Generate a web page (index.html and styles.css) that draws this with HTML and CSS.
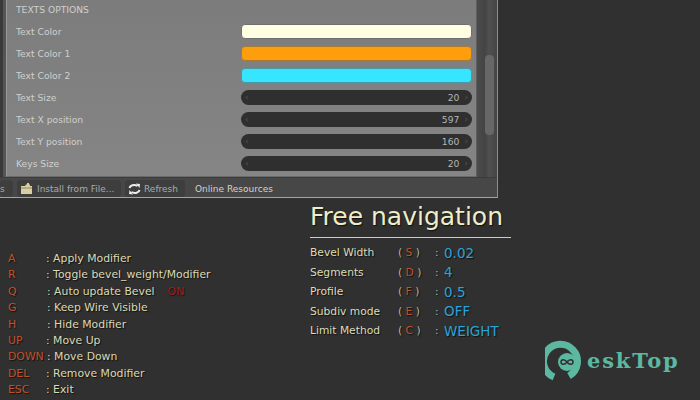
FILE: index.html
```html
<!DOCTYPE html>
<html lang="en">
<head>
<meta charset="UTF-8">
<title>Free navigation</title>
<link rel="stylesheet" href="styles.css">
</head>
<body>
<div class="ventana">
    <div class="cuerpo">
        <div class="panel">
            <div class="titulo">TEXTS OPTIONS</div>
            <div class="fila"><span>Text Color</span><div class="color crema"></div></div>
            <div class="fila"><span>Text Color 1</span><div class="color naranja"></div></div>
            <div class="fila"><span>Text Color 2</span><div class="color cian"></div></div>
            <div class="fila"><span>Text Size</span><div class="numero"><i>‹</i><b>20</b><i>›</i></div></div>
            <div class="fila"><span>Text X position</span><div class="numero"><i>‹</i><b>597</b><i>›</i></div></div>
            <div class="fila"><span>Text Y position</span><div class="numero"><i>‹</i><b>160</b><i>›</i></div></div>
            <div class="fila"><span>Keys Size</span><div class="numero"><i>‹</i><b>20</b><i>›</i></div></div>
        </div>
        <div class="scroll"><div class="thumb"></div></div>
    </div>
    <div class="pie">
        <div class="boton corto">s</div>
        <div class="boton instalar">
            <svg width="13" height="12" viewBox="0 0 13 12"><path d="M1 3h4l1-1.500h1V0h2v1.500h1V3h2v8H1z" fill="#d8cfa0"/><path d="M1 5h11" stroke="#8b8468"/></svg>
            Install from File...
        </div>
        <div class="boton refrescar">
            <svg width="13" height="12" viewBox="0 0 13 12" fill="none" stroke="#eee" stroke-width="2"><path d="M1.500 5C2 2.500 6 1 9.500 3"/><path d="M11.500 7C11 9.500 7 11 3.500 9"/><path d="M8 0.500l4 .5-.5 4z" fill="#eee" stroke="none"/><path d="M5 11.500l-4-.5.500-4z" fill="#eee" stroke="none"/></svg>
            Refresh
        </div>
        <div class="enlace">Online Resources</div>
    </div>
</div>
<div class="abajo">
    <div class="atajos">
        <div class="atajo"><span class="tecla">A</span><span>: Apply Modifier</span></div>
        <div class="atajo"><span class="tecla">R</span><span>: Toggle bevel_weight/Modifier</span></div>
        <div class="atajo"><span class="tecla">Q</span><span class="corrido">: Auto update Bevel</span><span class="activo">ON</span></div>
        <div class="atajo"><span class="tecla">G</span><span class="corrido">: Keep Wire Visible</span></div>
        <div class="atajo"><span class="tecla">H</span><span class="corrido">: Hide Modifier</span></div>
        <div class="atajo"><span class="tecla">UP</span><span>: Move Up</span></div>
        <div class="atajo"><span class="tecla">DOWN</span><span class="corrido">: Move Down</span></div>
        <div class="atajo"><span class="tecla">DEL</span><span>: Remove Modifier</span></div>
        <div class="atajo"><span class="tecla">ESC</span><span>: Exit</span></div>
    </div>
    <div class="navegacion">
        <h1>Free navigation</h1>
        <div class="opcion"><span class="nombre">Bevel Width</span><span class="par">( <em>S</em> )</span><span class="dos">:</span><span class="valor">0.02</span></div>
        <div class="opcion"><span class="nombre">Segments</span><span class="par">( <em>D</em> )</span><span class="dos">:</span><span class="valor">4</span></div>
        <div class="opcion"><span class="nombre">Profile</span><span class="par">( <em>F</em> )</span><span class="dos">:</span><span class="valor">0.5</span></div>
        <div class="opcion"><span class="nombre">Subdiv mode</span><span class="par">( <em>E</em> )</span><span class="dos">:</span><span class="valor">OFF</span></div>
        <div class="opcion"><span class="nombre">Limit Method</span><span class="par">( <em>C</em> )</span><span class="dos">:</span><span class="valor">WEIGHT</span></div>
    </div>
    <div class="logo">
        <svg width="42" height="42" viewBox="0 0 42 42">
            <path d="M9 38A17 17 0 1 1 24 37" fill="none" stroke="#5cb8a0" stroke-width="7"/>
            <circle cx="22" cy="23" r="9" fill="#5cb8a0"/>
            <path d="M22 23c-2-3-6-3-6 0s4 3 6 0 6-3 6 0-4 3-6 0z" fill="none" stroke="#303030" stroke-width="1.500"/>
        </svg>
        <span>eskTop</span>
    </div>
</div>
</body>
</html>
```

FILE: styles.css
```css
body {
    margin: 0;
    width: 700px;
    height: 400px;
    overflow: hidden;
    background-color: #303030;
    font-family: "DejaVu Sans", sans-serif;
    position: relative;
}
.ventana {
    width: 497px;
    height: 197px;
    border-right: 1px solid #8e8e88;
    border-bottom: 1px solid #a5a59c;
    background: #474747;
    display: flex;
    flex-direction: column;
}
.cuerpo {
    display: flex;
    height: 177px;
    padding-left: 3px;
    background: linear-gradient(to right, #3a3a3a 3px, #555 3px);
}
.panel {
    width: 470px;
    margin-left: 3px;
    padding: 0 4px 0 9px;
    box-sizing: border-box;
    background: linear-gradient(to bottom, #7c7c7c, #858585);
    border-left: 1px solid #999;
    border-bottom: 1px solid #6a6a6a;
    color: #cfcfcf;
    font-size: 9.200px;
}
.titulo {
    height: 20px;
    line-height: 19px;
}
.fila {
    display: flex;
    align-items: center;
    justify-content: space-between;
    height: 22px;
}
.color {
    width: 231px;
    height: 15px;
    border-radius: 4px;
    box-sizing: border-box;
    border: 1px solid #6f6f6f;
}
.crema { background: #fffde2; }
.naranja { background: #ff9e0c; border-color: #a87a3a; }
.cian { background: #36e6ff; border-color: #4c98a8; }
.numero {
    width: 231px;
    height: 15px;
    border-radius: 8px;
    background: #2f2f2f;
    display: flex;
    align-items: center;
    padding: 0 4px;
    box-sizing: border-box;
    color: #b5b5b5;
}
.numero i {
    font-style: normal;
    color: #555;
    font-size: 9px;
}
.numero b {
    font-weight: normal;
    margin-left: auto;
    margin-right: 5px;
}
.scroll {
    width: 21px;
    background: linear-gradient(to right, #4b4b4b, #444 40%, #505050 60%, #454545);
    border-left: 1px solid #5e5e5e;
    padding: 55px 0 0 8px;
    box-sizing: border-box;
}
.thumb {
    width: 9px;
    height: 80px;
    border-radius: 4px;
    background: #676767;
}
.pie {
    flex: 1;
    display: flex;
    align-items: center;
    gap: 4px;
    color: #aaa;
    font-size: 9px;
    padding-top: 2px;
    border-top: 1px solid #3c3c3c;
}
.boton {
    height: 17px;
    background: #3e3e3e;
    border-radius: 4px;
    display: flex;
    align-items: center;
    box-sizing: border-box;
}
.corto { width: 13px; }
.instalar { width: 104px; padding-left: 3px; gap: 4px; }
.refrescar { width: 60px; padding-left: 3px; gap: 3px; }
.enlace {
    margin-left: 6px;
    color: #d2d2d2;
}
.abajo {
    display: flex;
    height: 202px;
    position: relative;
}
.atajos {
    width: 302px;
    box-sizing: border-box;
    padding: 53px 0 0 8px;
    color: #d9d9b4;
    font-size: 10.850px;
    text-shadow: 1px 1px 1px #111;
}
.atajo {
    display: flex;
    height: 16.400px;
    line-height: 16.400px;
}
.tecla {
    width: 38px;
    color: #c2522a;
}
.corrido { margin-left: 1px; }
.activo {
    color: #a81a1a;
    margin-left: 13px;
}
.navegacion {
    margin-left: 8px;
    width: 201px;
    color: #dcdcb8;
    text-shadow: 1px 1px 1px #111;
}
h1 {
    margin: 0 0 5px;
    padding: 3px 0 4px;
    font-size: 25px;
    font-weight: normal;
    line-height: 32px;
    color: #eeeec8;
    border-bottom: 1px solid #cfcfb8;
}
.opcion {
    display: flex;
    align-items: center;
    height: 19.500px;
    font-size: 10.700px;
}
.nombre { width: 88px; }
.par {
    width: 37px;
    color: #b5b59c;
}
.par em {
    font-style: normal;
    color: #c2522a;
}
.dos {
    width: 9px;
    color: #b5b59c;
}
.valor {
    font-size: 13.500px;
    color: #2ba3d8;
}
.logo {
    position: absolute;
    left: 545px;
    top: 141px;
    display: flex;
    align-items: center;
    color: #5cb8a0;
    font-family: "DejaVu Serif", serif;
    font-weight: bold;
    font-size: 21px;
    letter-spacing: 1.800px;
}
```
